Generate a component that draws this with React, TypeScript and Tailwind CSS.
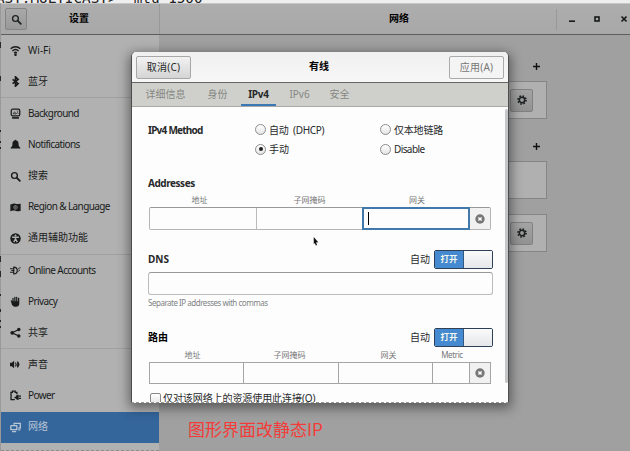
import React from 'react';

const svgs: Record<string, React.ReactNode> = {
  search: (
    <g fill="none" stroke="currentColor" strokeLinecap="round">
      <circle cx="6.5" cy="6.5" r="4.2" strokeWidth="2" />
      <path d="M10 10l4.3 4.3" strokeWidth="2.6" />
    </g>
  ),
  wifi: (
    <g fill="none" stroke="currentColor" strokeWidth="2">
      <path d="M1 5.5c4-4 10-4 14 0" />
      <path d="M3.5 8.8c2.6-2.6 6.4-2.6 9 0" />
      <path d="M6 11.6c1.2-1.2 2.8-1.2 4 0" />
      <circle cx="8" cy="14" r=".9" fill="currentColor" />
    </g>
  ),
  bluetooth: (
    <path d="M3.8 4.8l8 6.2L8 14.8V1.2L11.8 5l-8 6.2" fill="none" stroke="currentColor" strokeWidth="2.4" />
  ),
  background: (
    <g fill="none" stroke="currentColor">
      <rect x="1.8" y="1.8" width="12.4" height="9.6" rx="2" strokeWidth="1.8" />
      <path d="M3 14.4h10" strokeWidth="2.4" />
      <path d="M4.5 8.5l2.2-3 2 3zM9 8.5l2-2 1.2 2M10 4.5h2" strokeWidth="1" />
    </g>
  ),
  bell: <path d="M8 1c.9 0 1.3.6 1.3 1.3C11.8 3 12.500 5 12.500 7.500c0 2.500.8 3.600 2.500 5v1.300H1v-1.300c1.700-1.400 2.500-2.500 2.500-5C3.500 5 4.200 3 6.700 2.300 6.700 1.600 7.100 1 8 1z" fill="currentColor" />,
  region: (
    <g>
      <path d="M.5 3.500c2 0 3-1.500 5-1.500s3 1 5 1c2 0 3-.5 5-.5V13c-2 0-3 .5-5 .5s-3-1-5-1-3 1-5 1z" fill="currentColor" />
      <circle cx="8" cy="7.800" r="2.600" fill="none" stroke="#8c8c8c" strokeWidth="1.100" />
      <path d="M5.500 7.500h5M8 5v5.500" stroke="#8c8c8c" strokeWidth=".7" />
    </g>
  ),
  access: (
    <g>
      <circle cx="8" cy="8" r="7.600" fill="currentColor" />
      <circle cx="8" cy="3.600" r="1.500" fill="#b1b1b1" />
      <path d="M3 6.200h10M8 6v3.200M8 8.500l-2.600 4.700M8 8.500l2.600 4.700" stroke="#b1b1b1" strokeWidth="2" fill="none" />
    </g>
  ),
  accounts: (
    <g fill="none" stroke="currentColor" strokeWidth="1.700">
      <path d="M0 5.500h5M0 10.500h5M5.500 3v10c3.800 0 5-2.500 5-5s-1.200-5-5-5zM2 8h3" />
      <path d="M11 6.500c1.500 0 1-2.500 4.500-2.500M11 10c1.500 0 1-2.500 3.500-2.500" strokeWidth="1.300" />
    </g>
  ),
  hand: <path d="M1 6.500q1-1 2 0l.5 2V3.200q.9-1.200 1.800 0V7.500h.9V1.600q.9-1.200 1.800 0v5.900h.9V1.600q.9-1.200 1.800 0v5.900h.9V3q1-1 1.900 0v8c0 3-1.800 4.800-4.800 4.800-3 0-5-1-6-3.500z" fill="currentColor" />,
  share: (
    <g fill="currentColor">
      <circle cx="3.200" cy="8.500" r="2.700" /><circle cx="12.800" cy="3.500" r="2.500" /><circle cx="12.800" cy="13" r="2.500" />
      <path d="M3 8.500l10-5M3 8.500l10 4.500" stroke="currentColor" strokeWidth="1.700" />
    </g>
  ),
  sound: (
    <g>
      <path d="M0 5.500h2.500L6 2.500v11l-3.500-3H0z" fill="currentColor" />
      <path d="M8 5q1.800 3 0 6" fill="none" stroke="currentColor" strokeWidth="1.600" />
      <path d="M11.200 3.800q4.200 4.200 0 8.400q-.9-4.200 0-8.400z" fill="currentColor" stroke="currentColor" strokeWidth="1.200" />
    </g>
  ),
  power: (
    <g>
      <path d="M7 14H1.500V3.500H3.500V1.500H7.500V3.500H10V6" fill="none" stroke="currentColor" strokeWidth="1.900" />
      <path d="M6.500 11h4M12.500 8.800h3.500M12.500 12.200h3.500" stroke="currentColor" strokeWidth="1.700" />
      <path d="M12.500 7v7.500c-3 0-4.500-1.500-4.500-3.700S9.500 7 12.500 7z" fill="currentColor" />
    </g>
  ),
  network: (
    <g fill="none" stroke="currentColor" strokeWidth="1.900">
      <path d="M6 4V2h9v7h-3" />
      <rect x="1.200" y="5.200" width="8.800" height="6" rx=".8" />
      <path d="M3 14h6M12 11.500h3" />
    </g>
  ),
  gear: (
    <g fill="none" stroke="currentColor">
      <circle cx="8" cy="8" r="4.300" strokeWidth="2.400" />
      <circle cx="8" cy="8" r="6.400" strokeWidth="2.600" strokeDasharray="2.513" />
    </g>
  ),
};

function Icon({ name, className = 'size-[11px]' }: { name: string; className?: string }) {
  return <svg viewBox="0 0 16 16" className={`shrink-0 ${className}`}>{svgs[name]}</svg>;
}

type Item = { icon: string; label: string; latin?: boolean; active?: boolean };

const groups: { height: string; items: Item[] }[] = [
  { height: 'h-[63px]', items: [{ icon: 'wifi', label: 'Wi-Fi' }, { icon: 'bluetooth', label: '蓝牙' }] },
  {
    height: 'h-[157px]',
    items: [
      { icon: 'background', label: 'Background', latin: true },
      { icon: 'bell', label: 'Notifications', latin: true },
      { icon: 'search', label: '搜索' },
      { icon: 'region', label: 'Region & Language', latin: true },
      { icon: 'access', label: '通用辅助功能' },
    ],
  },
  {
    height: 'h-[94px]',
    items: [
      { icon: 'accounts', label: 'Online Accounts', latin: true },
      { icon: 'hand', label: 'Privacy', latin: true },
      { icon: 'share', label: '共享' },
    ],
  },
  {
    height: 'h-[94px]',
    items: [
      { icon: 'sound', label: '声音' },
      { icon: 'power', label: 'Power', latin: true },
      { icon: 'network', label: '网络', active: true },
    ],
  },
];

function Sidebar() {
  return (
    <nav className="flex w-[158px] shrink-0 flex-col bg-[#b1b1b1]">
      {groups.map((g, i) => (
        <div key={i} className={`flex shrink-0 flex-col ${g.height} ${i < 3 ? 'border-b border-[#a0a0a0]' : ''}`}>
          {g.items.map((it) => (
            <div
              key={it.label}
              className={`flex flex-1 items-center gap-[7px] pl-[9px] ${it.active ? 'bg-[#34659b] text-[#b9c6d6]' : 'text-[#191b1b]'}`}
            >
              <Icon name={it.icon} />
              <span className={`pb-[2px] ${it.latin ? 'tracking-[-0.600px]' : ''}`}>{it.label}</span>
            </div>
          ))}
        </div>
      ))}
      <div className="mt-auto border-b border-dashed border-[#8e8e8e]" />
    </nav>
  );
}

function Device({ gear, className }: { gear?: boolean; className: string }) {
  return (
    <div className={`flex h-[38px] w-[388px] items-center justify-end border border-[#858585] bg-[#b0b0b0] pr-[13px] ${className}`}>
      {gear && (
        <div className="flex h-[23px] w-[23px] items-center justify-center rounded-[2px] border border-[#818181] bg-linear-to-b from-[#a4a4a4] to-[#929292] text-[#1c2020]">
          <Icon name="gear" className="size-[10px]" />
        </div>
      )}
    </div>
  );
}

function Plus({ className }: { className: string }) {
  return (
    <svg viewBox="0 0 7 7" className={`mr-[7px] size-[7px] shrink-0 ${className}`}>
      <path d="M3.500 0v7M0 3.500h7" stroke="#111" strokeWidth="1.400" />
    </svg>
  );
}

function Radio({ label, on, className = '' }: { label: string; on?: boolean; className?: string }) {
  return (
    <label className="flex items-center gap-[3px] whitespace-pre">
      <span className="flex size-[11px] shrink-0 items-center justify-center rounded-full border border-[#8b8d8e] bg-linear-to-b from-white to-[#e4e4e4]">
        {on && <span className="size-[4px] rounded-full bg-[#202020]" />}
      </span>
      <span className={className}>{label}</span>
    </label>
  );
}

function Toggle() {
  return (
    <div className="flex items-center gap-[4px]">
      <span className="pb-[2px]">自动</span>
      <div className="flex h-[19px] w-[59px] overflow-hidden rounded-[2px] border border-[#2d4057]">
        <span className="flex w-[28px] items-center justify-center bg-[#4589d0] text-[8.500px] font-bold text-[#f3f7ed]">打开</span>
        <span className="flex-1 border-l border-[#315880] bg-linear-to-b from-[#fafafa] to-[#e6e7ea]" />
      </div>
    </div>
  );
}

function Remove() {
  return (
    <div className="flex flex-1 items-center justify-center bg-[#f1f1f1]">
      <svg viewBox="0 0 10 10" className="size-[10px]">
        <circle cx="5" cy="5" r="4.700" fill="#777" />
        <path d="M3.400 3.400l3.200 3.200M6.600 3.400L3.400 6.600" stroke="#fff" strokeWidth="1.400" />
      </svg>
    </div>
  );
}

const tabs = [
  { label: '详细信息', width: 'w-[67px]' },
  { label: '身份', width: 'w-[37px]' },
  { label: 'IPv4', width: 'w-[35px] mx-[5px]', active: true },
  { label: 'IPv6', width: 'w-[37px]' },
  { label: '安全', width: 'w-[43px]' },
];

function Dialog() {
  return (
    <section className="absolute top-[52px] left-[131px] flex h-[351px] w-[378px] flex-col overflow-hidden rounded-t-[5px] border-x border-b border-[#4d4d4d] border-b-[#979797] bg-[#fdfdfd] text-[#27292a] [border-bottom-style:dashed]">
      <header className="flex h-[31px] shrink-0 items-center justify-between border-b border-[#666] bg-linear-to-b from-[#f0f0f0] to-[#f7f7f7] px-[4px]">
        <button className="h-[23px] w-[55px] rounded-[2px] border border-[#a7a7a7] bg-linear-to-b from-[#f2f2f2] to-[#d5d5d5] pb-px tracking-[0.200px]">取消(C)</button>
        <strong className="pb-[2px] pr-[2px] text-black">有线</strong>
        <button className="h-[23px] w-[55px] rounded-[2px] border border-[#aaa] bg-[#f4f4f4] pb-px tracking-[0.200px] text-[#777]">应用(A)</button>
      </header>
      <div className="flex h-[24px] shrink-0 border-b border-[#a9aaa6] bg-[#cfd0cb] text-[#858783]">
        {tabs.map((t) => (
          <div key={t.label} className={`flex items-center justify-center ${t.width} ${t.active ? 'border-b-2 border-[#3b78b4] font-bold tracking-[-0.200px] text-[#26292a]' : 'pb-[2px]'}`}>
            {t.label}
          </div>
        ))}
      </div>
      <div className="flex flex-1">
        <div className="flex w-[361px] shrink-0 flex-col pl-[16px]">
          <div className="flex h-[66px] shrink-0 pt-[13px]">
            <strong className="w-[107px] leading-[20px] tracking-[-0.750px]">IPv4 Method</strong>
            <div className="grid h-[39px] grid-cols-[125px_110px]">
              <Radio label="自动  (DHCP)" className="tracking-[-0.300px]" />
              <Radio label="仅本地链路" className="tracking-[-0.200px]" />
              <Radio label="手动" on />
              <Radio label="Disable" className="tracking-[-0.600px]" />
            </div>
          </div>
          <strong className="h-[21px] shrink-0 leading-[20px] tracking-[-0.450px]">Addresses</strong>
          <div className="grid h-[13px] shrink-0 grid-cols-[103px_117px_98px] items-center justify-start pb-px text-center text-[8px] text-[#777]">
            <span>地址</span><span>子网掩码</span><span>网关</span>
          </div>
          <div className="ml-px flex h-[23px] w-[342px] shrink-0 rounded-[2px] border border-[#b4b4b4] border-t-[#999]">
            <div className="w-[107px] border-r border-[#bbb]" />
            <div className="w-[105px]" />
            <div className="-my-px flex w-[108px] items-center border-2 border-[#4179aa] pl-[4px]"><i className="h-[13px] w-px bg-black" /></div>
            <Remove />
          </div>
          <div className="mt-[20px] flex h-[19px] shrink-0 items-center justify-between">
            <strong className="pb-px">DNS</strong><Toggle />
          </div>
          <div className="mt-[3px] h-[23px] shrink-0 rounded-[3px] border border-[#bbb] border-t-[#999]" />
          <p className="mt-[2px] h-[13px] shrink-0 text-[8px] leading-[12px] tracking-[-0.480px] text-[#818385]">Separate IP addresses with commas</p>
          <div className="mt-[18px] flex h-[19px] shrink-0 items-center justify-between">
            <strong className="pb-[2px] text-black">路由</strong><Toggle />
          </div>
          <div className="mt-[2px] grid h-[13px] shrink-0 grid-cols-[89px_105px_93px_34px] items-center pb-px text-center text-[8px] text-[#777]">
            <span>地址</span><span>子网掩码</span><span>网关</span><span className="tracking-[-0.400px]">Metric</span>
          </div>
          <div className="ml-px flex h-[22px] w-[342px] shrink-0 divide-x divide-[#a5a5a5] border border-[#a5a5a5]">
            <div className="w-[94px]" /><div className="w-[95px]" /><div className="w-[94px]" /><div className="w-[37px]" />
            <Remove />
          </div>
          <label className="mt-[8px] flex h-[12px] shrink-0 items-center gap-[2px] pl-[2px]">
            <span className="size-[11px] rounded-[2px] border border-[#888] bg-linear-to-b from-white to-[#e6e6e6]" />
            <span className="pb-px tracking-[-0.080px] whitespace-nowrap">仅对该网络上的资源使用此连接(O)</span>
          </label>
        </div>
        <div className="mt-[2px] ml-auto h-[274px] w-[3px] rounded bg-[#c5c6c7]" />
      </div>
    </section>
  );
}

export default function App() {
  return (
    <div className="relative flex h-[451px] w-[630px] flex-col overflow-hidden bg-[#eee] font-['Noto_Sans','Noto_Sans_CJK_SC',sans-serif] text-[10px] leading-none">
      <div className="h-[3px] shrink-0 overflow-hidden">
        <div className="-mt-[10px] -ml-[4px] font-['DejaVu_Sans_Mono',monospace] text-[14.300px] leading-[16px] whitespace-pre text-[#222]">{'AST,MULTICAST>  mtu 1500'}</div>
      </div>
      <div className="flex flex-1 flex-col border-l border-[#999]">
        <header className="flex h-[32px] shrink-0 items-center border-t border-b border-t-[#c7c7c7] border-b-[#5c5e5d] bg-linear-to-b from-[#adadad] to-[#a8a8a8] text-black">
          <div className="flex h-full w-[159px] items-center border-r border-[#999] pl-[4px]">
            <div className="flex h-[22px] w-[22px] items-center justify-center rounded-[2px] border border-[#858585] bg-linear-to-b from-[#a8a8a8] to-[#999] text-[#202323]"><Icon name="search" /></div>
            <strong className="ml-[42px] pb-[2px]">设置</strong>
          </div>
          <strong className="flex-1 pb-[2px] pl-[82px] text-center">网络</strong>
          <div className="flex h-[21px] w-[74px] shrink-0 items-center border-l border-[#989898] pl-[12px]">
            <svg viewBox="0 0 58 8" className="h-[8px] w-[58px]" fill="none" stroke="#171a1a">
              <path d="M0 6.200h6" strokeWidth="1.600" />
              <rect x="26" y="2" width="4" height="4" strokeWidth="1.600" />
              <path d="M52.500 1.500l5 5M57.500 1.500l-5 5" strokeWidth="1.600" />
            </svg>
          </div>
        </header>
        <div className="flex flex-1">
          <Sidebar />
          <main className="flex flex-1 flex-col items-end bg-[#a0a0a0] pr-[83px]">
            <Plus className="mt-[28px]" />
            <Device gear className="mt-[11px]" />
            <Plus className="mt-[24px]" />
            <Device className="mt-[11px]" />
            <Device gear className="mt-[15px]" />
          </main>
        </div>
      </div>
      <svg viewBox="0 0 1 451" className="absolute top-0 left-0 h-[451px] w-px">
        <path d="M.5 42v6M.5 76v5M.5 130v2M.5 141v2M.5 147v2M.5 256v6M.5 271v6M.5 294v2M.5 309v3M.5 320v2M.5 326v2" stroke="#2a2a2a" />
      </svg>
      <div className="absolute top-[52px] left-[131px] h-[351px] w-[378px] rounded-t-[5px] shadow-[0_3px_12px_2px_rgba(0,0,0,0.450)]" />
      <Dialog />
      <svg viewBox="0 0 8 12" className="absolute top-[237px] left-[313px] h-[9px] w-[6px]">
        <path d="M1 0l6 7-3 .2 1.500 3.500-1.700.6L2.400 8 1 9.500z" fill="#111" />
      </svg>
      <div className="absolute top-[418px] left-[188px] font-['Noto_Sans_CJK_SC',sans-serif] text-[17px] leading-[22px] whitespace-nowrap text-[#f53b39]">图形界面改静态IP</div>
    </div>
  );
}
